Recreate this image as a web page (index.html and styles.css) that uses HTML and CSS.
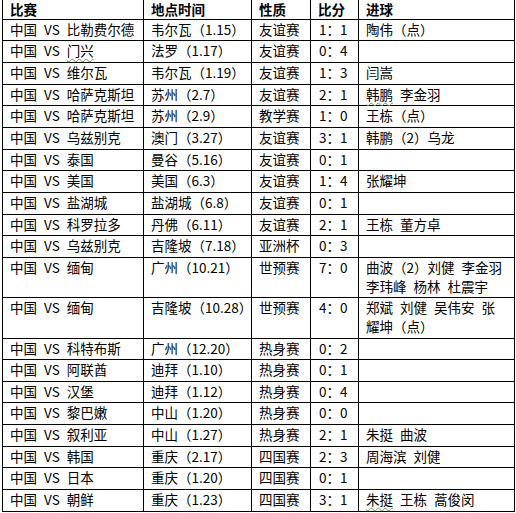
FILE: index.html
```html
<!DOCTYPE html>
<html lang="zh-CN">
<head>
<meta charset="utf-8">
<link rel="stylesheet" href="styles.css">
</head>
<body>
<table class="results">
  <colgroup>
    <col class="c1"><col class="c2"><col class="c3"><col class="c4"><col class="c5">
  </colgroup>
  <thead>
    <tr><th>比赛</th><th>地点时间</th><th>性质</th><th>比分</th><th>进球</th></tr>
  </thead>
  <tbody>
    <tr><td>中国 VS 比勒费尔德</td><td>韦尔瓦（1.15）</td><td>友谊赛</td><td>1：1</td><td>陶伟（点）</td></tr>
    <tr><td>中国 VS <span class="squiggle">门兴</span></td><td>法罗（1.17）</td><td>友谊赛</td><td>0：4</td><td></td></tr>
    <tr><td>中国 VS 维尔瓦</td><td>韦尔瓦（1.19）</td><td>友谊赛</td><td>1：3</td><td>闫嵩</td></tr>
    <tr><td>中国 VS 哈萨克斯坦</td><td>苏州（2.7）</td><td>友谊赛</td><td>2：1</td><td><span class="squiggle">韩鹏</span> 李金羽</td></tr>
    <tr><td>中国 VS 哈萨克斯坦</td><td>苏州（2.9）</td><td>教学赛</td><td>1：0</td><td>王栋（点）</td></tr>
    <tr><td>中国 VS 乌兹别克</td><td>澳门（3.27）</td><td>友谊赛</td><td>3：1</td><td>韩鹏（2）乌龙</td></tr>
    <tr><td>中国 VS 泰国</td><td>曼谷（5.16）</td><td>友谊赛</td><td>0：1</td><td></td></tr>
    <tr><td>中国 VS 美国</td><td>美国（6.3）</td><td>友谊赛</td><td>1：4</td><td>张耀坤</td></tr>
    <tr><td>中国 VS 盐湖城</td><td>盐湖城（6.8）</td><td>友谊赛</td><td>0：1</td><td></td></tr>
    <tr><td>中国 VS 科罗拉多</td><td>丹佛（6.11）</td><td>友谊赛</td><td>2：1</td><td>王栋 董方卓</td></tr>
    <tr><td>中国 VS 乌兹别克</td><td>吉隆坡（7.18）</td><td>亚洲杯</td><td>0：3</td><td></td></tr>
    <tr class="tall"><td>中国 VS 缅甸</td><td>广州（10.21）</td><td>世预赛</td><td>7：0</td><td>曲波（2）刘健 李金羽<br>李玮峰 杨林 杜震宇</td></tr>
    <tr class="tall"><td>中国 VS 缅甸</td><td>吉隆坡（10.28）</td><td>世预赛</td><td>4：0</td><td>郑斌 刘健 吴伟安 张<br>耀坤（点）</td></tr>
    <tr><td>中国 VS 科特布斯</td><td>广州（12.20）</td><td>热身赛</td><td>0：2</td><td></td></tr>
    <tr><td>中国 VS 阿联酋</td><td>迪拜（1.10）</td><td>热身赛</td><td>0：1</td><td></td></tr>
    <tr><td>中国 VS 汉堡</td><td>迪拜（1.12）</td><td>热身赛</td><td>0：4</td><td></td></tr>
    <tr><td>中国 VS 黎巴嫩</td><td>中山（1.20）</td><td>热身赛</td><td>0：0</td><td></td></tr>
    <tr><td>中国 VS 叙利亚</td><td>中山（1.27）</td><td>热身赛</td><td>2：1</td><td>朱挺 曲波</td></tr>
    <tr><td>中国 VS 韩国</td><td>重庆（2.17）</td><td>四国赛</td><td>2：3</td><td>周海滨 刘健</td></tr>
    <tr><td>中国 VS 日本</td><td>重庆（1.20）</td><td>四国赛</td><td>0：1</td><td></td></tr>
    <tr><td>中国 VS 朝鲜</td><td>重庆（1.23）</td><td>四国赛</td><td>3：1</td><td><span class="squiggle">朱挺</span> 王栋 蒿俊闵</td></tr>
  </tbody>
</table>
</body>
</html>
```
FILE: styles.css
```css
html, body {
  margin: 0;
  padding: 0;
  background: #fff;
}

body {
  font-family: "Noto Sans CJK SC", "Noto Sans", sans-serif;
  font-size: 13.5px;
  color: #000;
  text-spacing-trim: space-all;
}

.results {
  margin-left: 2px;
  width: 512px;
  table-layout: fixed;
  border-collapse: collapse;
  border-top: hidden;
}

.c1 { width: 141px; }
.c2 { width: 108px; }
.c3 { width: 59px; }
.c4 { width: 48px; }
.c5 { width: 156px; }

.results th,
.results td {
  border: 1px solid #000;
  padding: 0 4px 2px 7px;
  line-height: 18.65px;
  text-align: left;
  vertical-align: top;
  white-space: nowrap;
  word-spacing: 4px;
}

.results th {
  font-weight: 700;
  padding-bottom: 0;
}

.results td:nth-child(4) {
  padding-left: 8px;
}

.squiggle {
  text-decoration: underline wavy #5f9e4a;
  text-decoration-thickness: 1px;
  text-underline-offset: 2px;
}
```
